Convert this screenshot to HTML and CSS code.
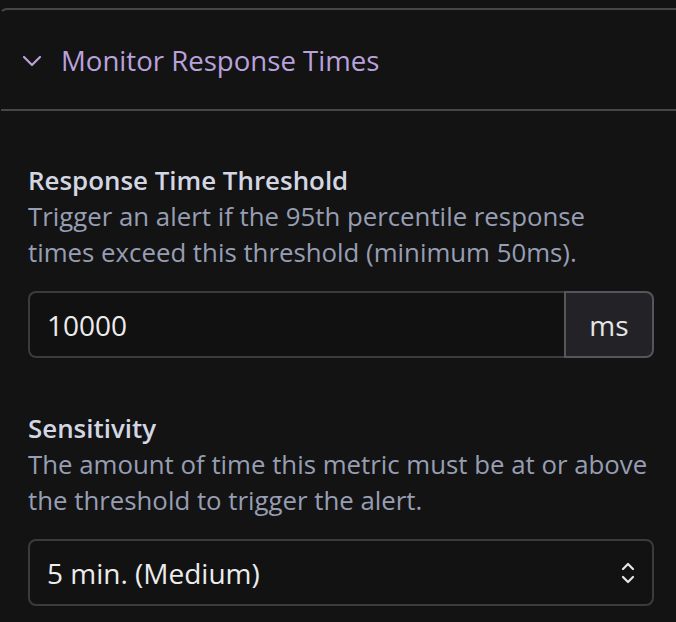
FILE: index.html
```html
<!DOCTYPE html>
<html>
<head>
<meta charset="utf-8">
<link rel="stylesheet" href="styles.css">
</head>
<body>
<div class="panel">
  <div class="section-header">
    <svg class="chevron" width="20" height="12" viewBox="0 0 20 12"><path d="M2 2 L10 10 L18 2" fill="none" stroke="#b9a2dc" stroke-width="2.2" stroke-linecap="round" stroke-linejoin="round"/></svg>
    <span class="section-title">Monitor Response Times</span>
  </div>
  <div class="section-body">
    <div class="field">
      <div class="label">Response Time Threshold</div>
      <div class="desc">Trigger an alert if the 95th percentile response<br>times exceed this threshold (minimum 50ms).</div>
      <div class="input-group">
        <div class="input">10000</div>
        <div class="addon">ms</div>
      </div>
    </div>
    <div class="field">
      <div class="label">Sensitivity</div>
      <div class="desc">The amount of time this metric must be at or above the threshold to trigger the alert.</div>
      <div class="select">
        <span>5 min. (Medium)</span>
        <svg class="updown" width="14" height="24" viewBox="0 0 14 24"><path d="M2 8 L7 3 L12 8 M2 16 L7 21 L12 16" fill="none" stroke="#e6e6e6" stroke-width="2.2" stroke-linecap="round" stroke-linejoin="round"/></svg>
      </div>
    </div>
  </div>
</div>
</body>
</html>
```
FILE: styles.css
```css
html, body {
  margin: 0;
  padding: 0;
  background: #131313;
}
body {
  font-family: "Open Sans", "Noto Sans", sans-serif;
  width: 676px;
  height: 622px;
  overflow: hidden;
}
.panel {
  margin-top: 8px;
  margin-left: -1px;
  border-top: 2px solid #474747;
  border-left: 2px solid transparent;
  border-top-left-radius: 8px;
}
.section-header {
  display: flex;
  align-items: center;
  padding-left: 21px;
  gap: 19px;
  border-bottom: 2px solid #474747;
  box-sizing: border-box;
  height: 101px;
}
.chevron {
  margin-top: 2px;
}
.section-title {
  color: #b9a2dc;
  font-size: 27.6px;
}
.section-body {
  padding: 51px 20px 0 27px;
  display: flex;
  flex-direction: column;
  gap: 52px;
}
.label {
  color: #d3d7e3;
  font-weight: 600;
  font-size: 25.9px;
  line-height: 36px;
}
.desc {
  color: #979eb3;
  font-size: 25.8px;
  line-height: 36px;
}
.input-group {
  margin-top: 21px;
  margin-right: 2px;
  display: flex;
  height: 67px;
}
.input {
  flex: 1;
  border: 2px solid #3b3b3e;
  border-right: none;
  border-radius: 8px 0 0 8px;
  background: #111111;
  color: #ececec;
  font-size: 28px;
  display: flex;
  align-items: center;
  padding-left: 17px;
}
.addon {
  width: 86px;
  border: 2px solid #55565b;
  border-radius: 0 8px 8px 0;
  background: #232327;
  color: #e6e6e6;
  font-size: 28px;
  display: flex;
  align-items: center;
  justify-content: center;
}
.select {
  margin-top: 21px;
  margin-right: 2px;
  height: 67px;
  box-sizing: border-box;
  border: 2px solid #3b3b3e;
  border-radius: 8px;
  background: #121212;
  color: #ececec;
  font-size: 28px;
  display: flex;
  align-items: center;
  justify-content: space-between;
  padding: 0 17px 0 17px;
}
```
